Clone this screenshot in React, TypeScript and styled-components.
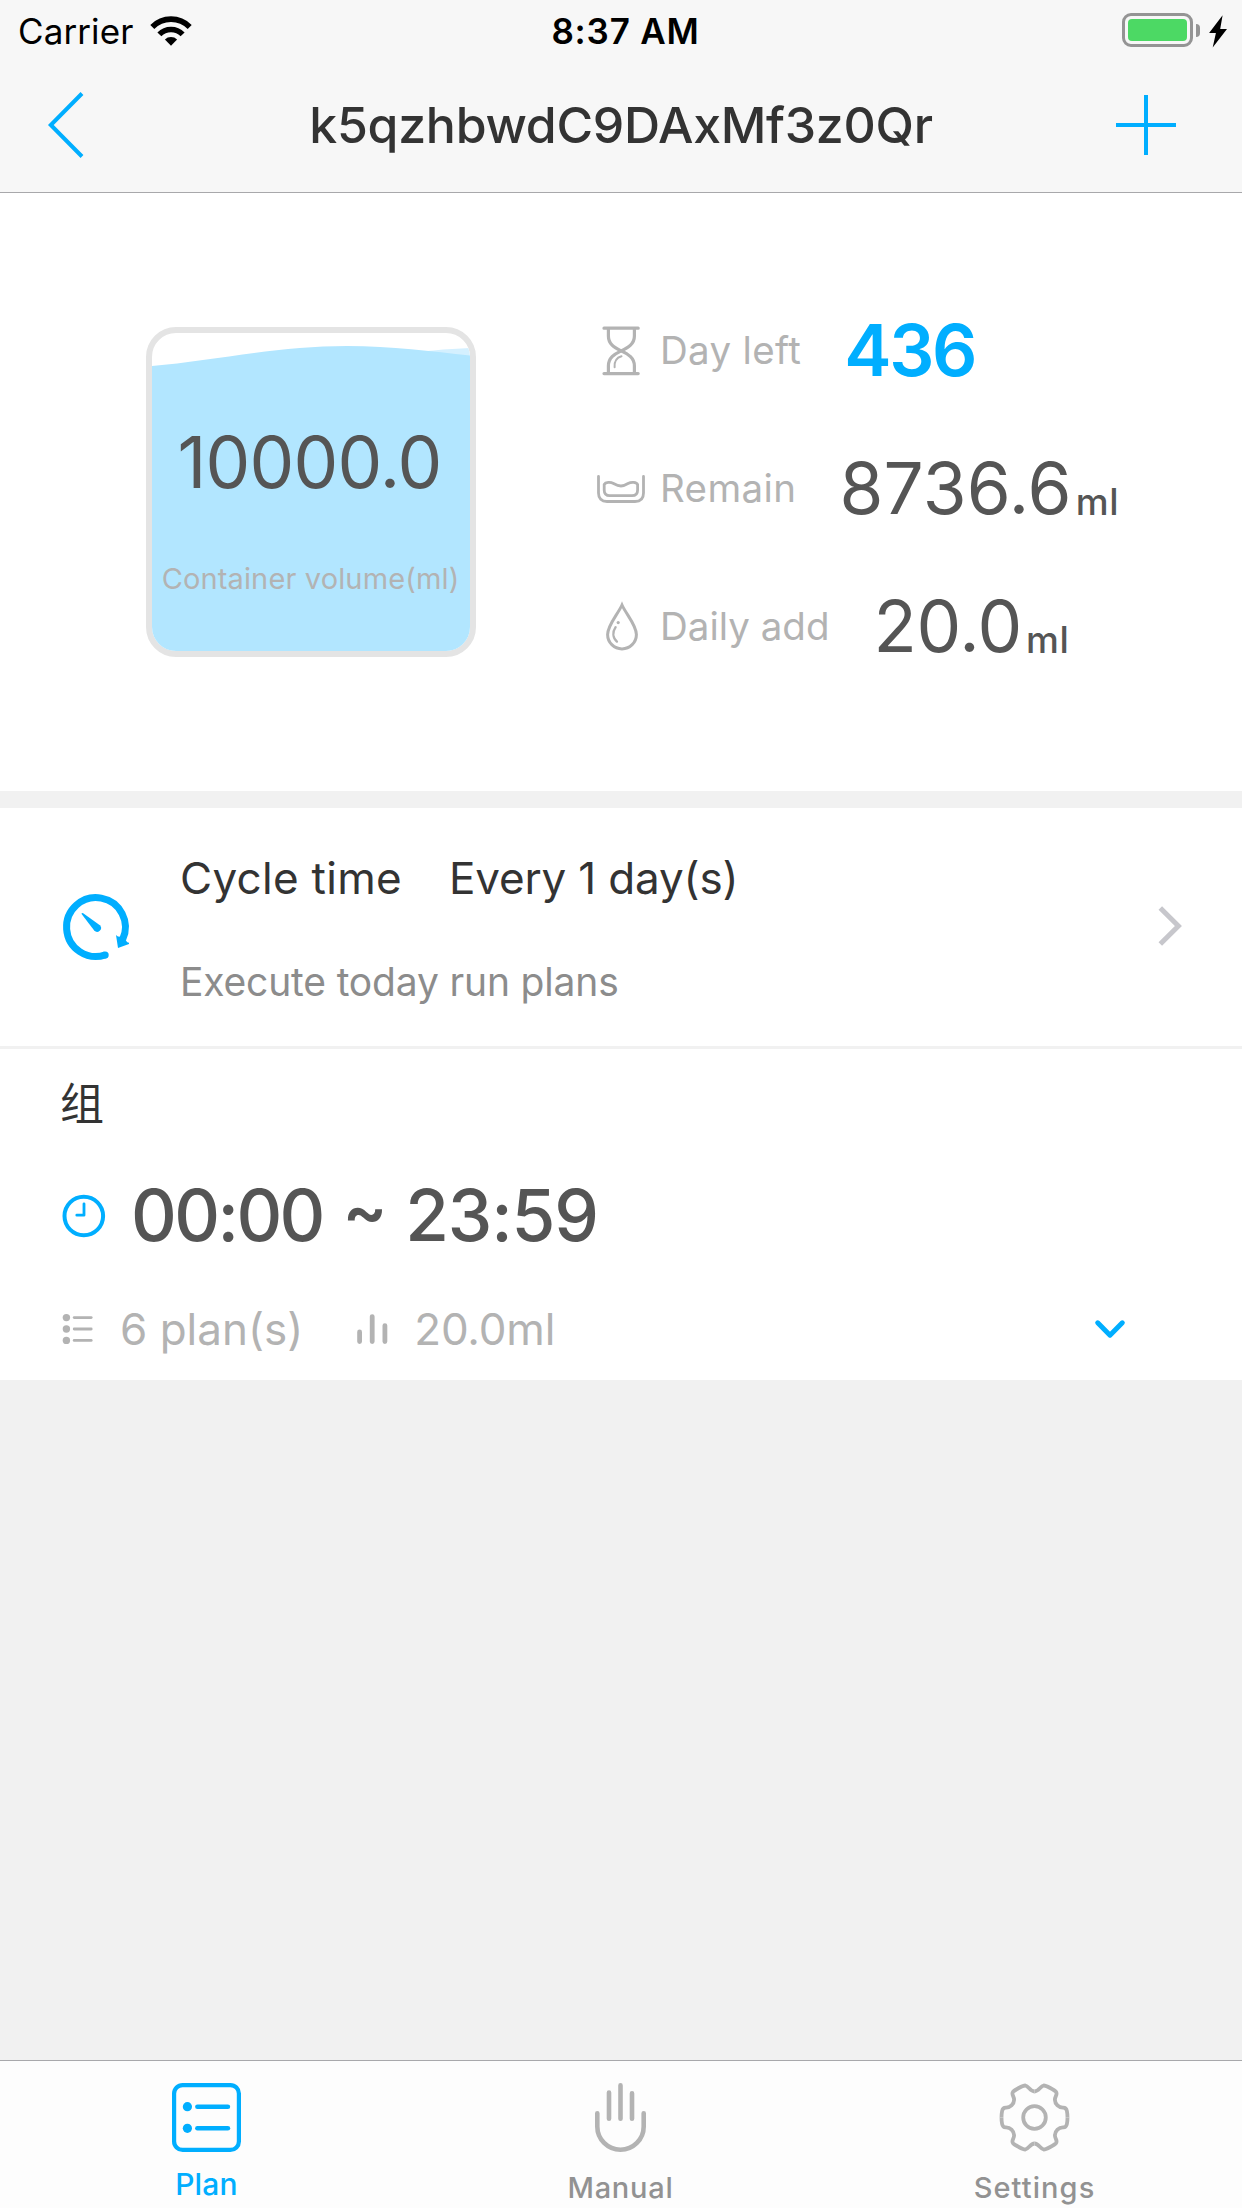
import React from 'react';
import styled, { createGlobalStyle } from 'styled-components';

const BLUE = '#00aeff';
const MUTED = '#b3b3b3';
const INK = '#555555';
const DARK = '#333333';

const GlobalStyle = createGlobalStyle`
  * { box-sizing: border-box; }
  body {
    margin: 0;
    font-family: Inter, "Noto Sans CJK SC", sans-serif;
    background: #f1f1f1;
  }
  svg { display: block; flex: none; overflow: visible; }
`;

const Screen = styled.div`
  display: flex;
  flex-direction: column;
  width: 1242px;
  height: 2208px;
  overflow: hidden;
  background: #f1f1f1;
`;

const Text = styled.span<{
  $size: number;
  $color?: string;
  $weight?: number;
  $track?: number;
  $line?: number;
}>`
  display: block;
  white-space: pre;
  font-size: ${p => p.$size}px;
  font-weight: ${p => p.$weight ?? 400};
  color: ${p => p.$color ?? DARK};
  letter-spacing: ${p => p.$track ?? 0}px;
  line-height: ${p => p.$line ?? 60}px;
`;

/* ---------- header ---------- */

const Header = styled.header`
  height: 193px;
  flex: none;
  background: #f7f7f7;
  border-bottom: 1px solid #a8a8ab;
`;

const StatusBar = styled.div`
  display: grid;
  grid-template-columns: 1fr auto 1fr;
  align-items: center;
  height: 62px;
  padding: 0 14px 0 18px;
`;

const StatusLeft = styled.div`
  display: flex;
  align-items: center;
  gap: 17px;
`;

const Clock = styled.div`
  padding-left: 5px;
`;

const StatusRight = styled.div`
  display: flex;
  align-items: center;
  justify-content: flex-end;
`;

const Battery = styled.div`
  width: 71px;
  height: 34px;
  padding: 3px;
  border: 3px solid #949494;
  border-radius: 9px;
  margin-top: -2px;
`;

const Charge = styled.div`
  width: 100%;
  height: 100%;
  border-radius: 4px;
  background: #4cd964;
`;

const BatteryCap = styled.div`
  width: 4px;
  height: 13px;
  margin: -2px 8px 0 3px;
  border-radius: 0 4px 4px 0;
  background: #949494;
`;

const NavBar = styled.nav`
  display: grid;
  grid-template-columns: 1fr auto 1fr;
  align-items: center;
  height: 126px;
  padding: 0 48px;
`;

const NavEnd = styled.div`
  display: flex;
  justify-content: flex-end;
  padding-right: 18px;
`;

/* ---------- overview ---------- */

const Overview = styled.section`
  display: flex;
  flex: none;
  height: 598px;
  padding-left: 146px;
  background: #fff;
`;

const Tank = styled.div`
  display: grid;
  width: 330px;
  height: 330px;
  margin-top: 134px;
  border: 6px solid #e4e4e4;
  border-radius: 30px;
  overflow: hidden;
  background: #fff;
  > * { grid-area: 1 / 1; }
`;

const TankLabels = styled.div`
  z-index: 1;
  display: flex;
  flex-direction: column;
  align-items: center;
  padding: 89px 3px 0 0;
`;

const TankCaption = styled.div`
  margin-top: 37px;
  padding-left: 2px;
`;

const Stats = styled.div`
  display: flex;
  flex-direction: column;
  margin-left: 120px;
  padding-top: 88px;
`;

const StatRow = styled.div`
  display: flex;
  align-items: center;
  height: 138px;
`;

const StatIcon = styled.div`
  display: flex;
  justify-content: center;
  width: 50px;
  margin-right: 14px;
  padding-top: 1px;
`;

const StatValue = styled.div<{ $gap: number }>`
  display: flex;
  align-items: center;
  gap: 4px;
  margin-left: ${p => p.$gap}px;
`;

const Unit = styled.div`
  margin-top: 28px;
`;

/* ---------- cycle ---------- */

const Cycle = styled.section`
  display: flex;
  align-items: center;
  flex: none;
  height: 241px;
  margin-top: 17px;
  padding: 0 59px 0 63px;
  background: #fff;
  border-bottom: 3px solid #f1f1f1;
`;

const CycleBody = styled.div`
  flex: 1;
  margin-left: 51px;
  padding-top: 6px;
`;

const CycleTitle = styled.div`
  display: flex;
  gap: 47px;
`;

const Disclosure = styled.div`
  padding-bottom: 3px;
`;

/* ---------- group ---------- */

const Group = styled.section`
  flex: none;
  height: 331px;
  padding: 0 117px 0 62px;
  background: #fff;
`;

const GroupName = styled.div`
  display: flex;
  align-items: center;
  height: 108px;
  margin-left: -2px;
  padding-top: 2px;
`;

const TimeRow = styled.div`
  display: flex;
  align-items: center;
  height: 116px;
`;

const TimeRange = styled.div`
  display: flex;
  margin-left: 26px;
  gap: 20px;
`;

const Tilde = styled.div`
  margin-top: -5px;
  margin-right: -2px;
`;

const MetaRow = styled.div`
  display: flex;
  align-items: center;
  height: 107px;
  padding-top: 5px;
`;

const Meta = styled.div<{ $gap: number }>`
  display: flex;
  align-items: center;
  gap: ${p => p.$gap}px;
  margin-right: 54px;
`;

const Expand = styled.div`
  margin-left: auto;
`;

/* ---------- tab bar ---------- */

const TabBar = styled.footer`
  display: grid;
  grid-template-columns: repeat(3, 1fr);
  height: 148px;
  margin-top: auto;
  border-top: 1px solid #a8a8ab;
  background: #fdfdfd;
`;

const Tab = styled.div<{ $active?: boolean }>`
  display: flex;
  flex-direction: column;
  align-items: center;
  gap: ${p => (p.$active ? 12 : 16)}px;
  padding: 22px 1px 0 0;
  color: ${p => (p.$active ? BLUE : MUTED)};
`;

/* ---------- icons ---------- */

const WifiIcon = () => (
  <svg width="42" height="30" viewBox="0 0 42 30" fill="none" stroke="#000" strokeWidth="5.6">
    <path d="M2.3 11 A26.2 26.2 0 0 1 39.7 11" />
    <path d="M9.4 18.4 A16.2 16.2 0 0 1 32.6 18.4" />
    <path d="M21 29.8 L14.9 23.6 A8.7 8.7 0 0 1 27.1 23.6 Z" fill="#000" stroke="none" />
  </svg>
);

const BoltIcon = () => (
  <svg width="20" height="33" viewBox="0 0 20 33">
    <path d="M14.6 .3 L12.2 14 H19 L4.7 32.4 L7.9 18 H1.1 Z" fill="#000" />
  </svg>
);

const BackIcon = () => (
  <svg width="36" height="66" viewBox="0 0 36 66" fill="none" stroke={BLUE} strokeWidth="4">
    <path d="M34 1.5 L2.8 33 L34 64.5" />
  </svg>
);

const PlusIcon = () => (
  <svg width="60" height="60" viewBox="0 0 60 60" stroke={BLUE} strokeWidth="4">
    <path d="M30 0 V60 M0 30 H60" />
  </svg>
);

const Water = () => (
  <svg width="318" height="318" viewBox="0 0 318 318">
    <path d="M240 22 C270 18 295 16 318 15 V60 H240 Z" fill="#d4f0ff" />
    <path d="M0 33 C60 28 125 13 195 13 C240 13 280 18.5 318 22.5 V318 H0 Z" fill="#b2e6ff" />
  </svg>
);

const HourglassIcon = () => (
  <svg width="38" height="50" viewBox="0 0 38 50" fill="none" stroke={MUTED} strokeWidth="3.2" strokeLinecap="round">
    <path d="M2 2.2 H36.2 M2 47.6 H36.2" />
    <path d="M6.4 3 V10 C6.4 18 12 21.5 19.2 24.9 C26.4 28.3 32.4 32 32.4 40 V47" />
    <path d="M32.4 3 V10 C32.4 18 26.4 21.5 19.2 24.9 C12 28.3 6.4 32 6.4 40 V47" />
    <path d="M12.6 41.3 C12.2 35.5 14.5 31.7 19.5 30.3" strokeWidth="2" />
  </svg>
);

const BowlIcon = () => (
  <svg width="48" height="28" viewBox="0 0 48 28" fill="none" stroke={MUTED} strokeWidth="2.8" strokeLinecap="round">
    <path d="M1.5 1.5 V18 C1.5 23.5 4.5 26.5 10 26.5 H38 C43.5 26.5 46.5 23.5 46.5 18 V1.5" />
    <path d="M7.2 9.5 C8.5 7 13.5 6.8 16.5 8.5 C22.5 11.8 25.5 11.8 31 8.5 C34.5 6.6 39.5 7 40.6 9.5 V15 C40.6 18.8 38.6 20.7 35 20.7 H12.8 C9.2 20.7 7.2 18.8 7.2 15 Z" />
  </svg>
);

const DropIcon = () => (
  <svg width="33" height="49" viewBox="0 0 33 49" fill="none" stroke={MUTED} strokeWidth="3" strokeLinecap="round">
    <path d="M17 3 C13 12 2.6 23 2.6 32.5 A14.4 14.4 0 0 0 31.4 32.5 C31.4 23 21 12 17 3 Z" />
    <circle cx="13.2" cy="20.6" r="1.6" fill={MUTED} stroke="none" />
    <path d="M10.6 25.2 C7.4 30 7.6 35.6 11.9 39.6" strokeWidth="2.4" />
  </svg>
);

const TimerIcon = () => (
  <svg width="66" height="66" viewBox="0 0 66 66" fill="none" stroke={BLUE}>
    <path d="M42.4 60.9 A29.4 29.4 0 1 1 59.6 45.5" strokeWidth="7" />
    <circle cx="42.2" cy="60.9" r="3.5" fill={BLUE} stroke="none" />
    <path d="M53 41 Q54.6 43 57 42.6 L63 46.6 Q64 49 66 48.6 V50 L55 54 Z" fill={BLUE} stroke="none" />
    <path d="M18.6 20 Q18.4 18.6 20.2 19.3 L36.9 31.2 A3.9 3.9 0 1 1 31.2 36.6 Z" fill={BLUE} stroke="none" />
  </svg>
);

const ChevronRight = () => (
  <svg width="25" height="40" viewBox="0 0 25 40" fill="none" stroke="#c7c7cc" strokeWidth="5">
    <path d="M2.3 2 L20.4 20 L2.3 38" />
  </svg>
);

const ClockIcon = () => (
  <svg width="43" height="43" viewBox="0 0 43 43" fill="none" stroke={BLUE}>
    <circle cx="21.8" cy="22" r="19.3" strokeWidth="4" />
    <path d="M22 9.8 V21.2 H14.8" strokeWidth="2.8" strokeLinecap="round" strokeLinejoin="round" />
  </svg>
);

const ListIcon = () => (
  <svg width="31" height="31" viewBox="0 0 31 31">
    {[3.6, 15, 26.4].map(y => (
      <g key={y}>
        <circle cx="4.4" cy={y} r="3.7" fill={MUTED} />
        <path d={`M12.2 ${y} H29.2`} stroke={MUTED} strokeWidth="2.8" strokeLinecap="round" />
      </g>
    ))}
  </svg>
);

const BarsIcon = () => (
  <svg width="31" height="31" viewBox="0 0 31 31" stroke={MUTED} strokeWidth="4.8" strokeLinecap="round">
    <path d="M2.6 18 V27.6 M15.2 2.6 V27.6 M27.9 11.6 V27.6" />
  </svg>
);

const ChevronDown = () => (
  <svg width="30" height="19" viewBox="0 0 30 19" fill="none" stroke={BLUE} strokeWidth="5" strokeLinecap="round" strokeLinejoin="round">
    <path d="M2.7 2.8 L15 15.2 L27.3 2.8" />
  </svg>
);

const PlanIcon = () => (
  <svg width="69" height="69" viewBox="0 0 69 69" fill="none" stroke={BLUE} strokeWidth="4.2">
    <rect x="2.1" y="2.1" width="64.8" height="64.8" rx="8.5" />
    {[23.7, 45.3].map(y => (
      <g key={y}>
        <circle cx="15.4" cy={y} r="4.6" fill={BLUE} stroke="none" />
        <path d={`M25.4 ${y} H55.9`} strokeLinecap="round" strokeWidth="4.6" />
      </g>
    ))}
  </svg>
);

const HandIcon = () => (
  <svg width="51" height="69" viewBox="0 0 51 69" fill="none" stroke={MUTED} strokeWidth="4.6" strokeLinecap="round">
    <path d="M14 9.6 V35.8 M25.5 2.4 V35.8 M37 10.4 V35.8" />
    <path d="M2.3 30.3 V43.5 A23.2 23.2 0 0 0 48.7 43.5 V30.3" />
  </svg>
);

const gearQuarter =
  'M0 -26 C4.2 -26 5.8 -31.2 9.2 -32 C11.5 -32.3 20.2 -27 21.4 -25.8 C23.6 -23.2 20.4 -21.6 20.4 -17.7 C20.6 -13.2 24.2 -9.8 28.6 -9.9 C31.4 -10 32 -8.6 32.4 -6.5 C32.8 -4.5 33 -2.4 33 0';

const GearIcon = () => (
  <svg width="69" height="69" viewBox="-34.5 -34.5 69 69" fill="none" stroke={MUTED} strokeWidth="3.8">
    <path d={gearQuarter} />
    <path d={gearQuarter} transform="scale(-1 1)" />
    <path d={gearQuarter} transform="scale(1 -1)" />
    <path d={gearQuarter} transform="scale(-1 -1)" />
    <circle r="11.3" />
  </svg>
);

/* ---------- data ---------- */

const stats = [
  { icon: <HourglassIcon />, label: 'Day left', track: 0.33, value: '436', accent: true, gap: 43, vtrack: -2.4 },
  { icon: <BowlIcon />, label: 'Remain', track: 0.4, value: '8736.6', unit: 'ml', gap: 43, vtrack: 0.2 },
  { icon: <DropIcon />, label: 'Daily add', track: 0, value: '20.0', unit: 'ml', gap: 44, vtrack: -0.3 },
];

export default function App() {
  return (
    <Screen>
      <GlobalStyle />
      <Header>
        <StatusBar>
          <StatusLeft>
            <Text $size={35} $color="#000" $track={0.1}>Carrier</Text>
            <WifiIcon />
          </StatusLeft>
          <Clock>
            <Text $size={35} $color="#000" $weight={600} $track={0.8}>8:37 AM</Text>
          </Clock>
          <StatusRight>
            <Battery><Charge /></Battery>
            <BatteryCap />
            <BoltIcon />
          </StatusRight>
        </StatusBar>
        <NavBar>
          <BackIcon />
          <Text $size={50} $weight={500} $track={-0.28}>k5qzhbwdC9DAxMf3z0Qr</Text>
          <NavEnd><PlusIcon /></NavEnd>
        </NavBar>
      </Header>

      <Overview>
        <Tank>
          <Water />
          <TankLabels>
            <Text $size={71} $color={INK} $track={-0.8} $line={80}>10000.0</Text>
            <TankCaption>
              <Text $size={29} $color={MUTED} $track={0.14} $line={80}>Container volume(ml)</Text>
            </TankCaption>
          </TankLabels>
        </Tank>
        <Stats>
          {stats.map(s => (
            <StatRow key={s.label}>
              <StatIcon>{s.icon}</StatIcon>
              <Text $size={38.5} $color={MUTED} $track={s.track} $line={61}>{s.label}</Text>
              <StatValue $gap={s.gap}>
                <Text $size={71} $color={s.accent ? BLUE : INK} $weight={s.accent ? 600 : 400} $track={s.vtrack} $line={81}>
                  {s.value}
                </Text>
                {s.unit && <Unit><Text $size={37} $color={INK} $weight={500} $track={0.6}>{s.unit}</Text></Unit>}
              </StatValue>
            </StatRow>
          ))}
        </Stats>
      </Overview>

      <Cycle>
        <TimerIcon />
        <CycleBody>
          <CycleTitle>
            <Text $size={44} $track={0.29} $line={103}>Cycle time</Text>
            <Text $size={44} $track={-0.16} $line={103}>Every 1 day(s)</Text>
          </CycleTitle>
          <Text $size={39} $color="#8c8c8c" $track={-0.17} $line={103}>Execute today run plans</Text>
        </CycleBody>
        <Disclosure><ChevronRight /></Disclosure>
      </Cycle>

      <Group>
        <GroupName><Text $size={44}>组</Text></GroupName>
        <TimeRow>
          <ClockIcon />
          <TimeRange>
            <Text $size={71} $color={INK} $weight={500} $track={-2.6} $line={80}>00:00</Text>
            <Tilde><Text $size={66} $color={INK} $weight={600} $line={80}>~</Text></Tilde>
            <Text $size={71} $color={INK} $weight={500} $track={-1.2} $line={80}>23:59</Text>
          </TimeRange>
        </TimeRow>
        <MetaRow>
          <Meta $gap={27}>
            <ListIcon />
            <Text $size={44} $color={MUTED}>6 plan(s)</Text>
          </Meta>
          <Meta $gap={26}>
            <BarsIcon />
            <Text $size={44} $color={MUTED} $track={-0.2}>20.0ml</Text>
          </Meta>
          <Expand><ChevronDown /></Expand>
        </MetaRow>
      </Group>

      <TabBar>
        <Tab $active>
          <PlanIcon />
          <Text $size={30} $color={BLUE} $weight={500} $track={0.2} $line={40}>Plan</Text>
        </Tab>
        <Tab>
          <HandIcon />
          <Text $size={29} $color="#929292" $weight={500} $track={0.75} $line={40}>Manual</Text>
        </Tab>
        <Tab>
          <GearIcon />
          <Text $size={29} $color="#929292" $weight={500} $track={1.08} $line={40}>Settings</Text>
        </Tab>
      </TabBar>
    </Screen>
  );
}
